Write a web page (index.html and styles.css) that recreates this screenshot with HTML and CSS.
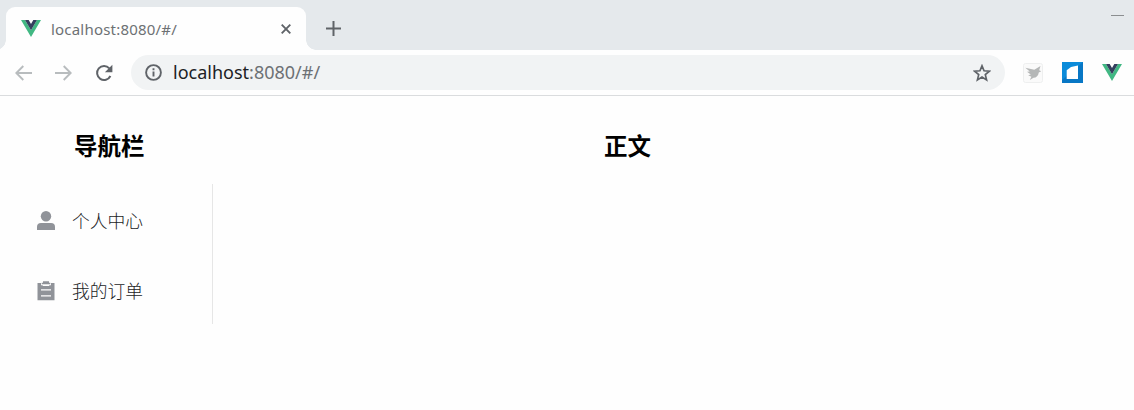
FILE: index.html
```html
<!DOCTYPE html>
<html lang="zh-CN">
<head>
<meta charset="utf-8">
<title>localhost:8080/#/</title>
<link rel="stylesheet" href="styles.css">
</head>
<body>
<svg class="defs" width="0" height="0">
  <symbol id="vue" viewBox="0 0 20 17">
    <path fill="#41b883" d="M0 0h4l6 10.300L16 0h4L10 17z"/>
    <path fill="#34405e" d="M4 0h3.700L10 4l2.300-4H16l-6 10.300z"/>
  </symbol>
</svg>
<header class="tabstrip">
  <div class="tab">
    <svg class="vue" viewBox="0 0 20 17"><use href="#vue"/></svg>
    <span class="tab-title">localhost:8080/#/</span>
    <svg class="close" viewBox="0 0 10 10"><path d="M.7.7l8.600 8.600M9.300.7L.7 9.300"/></svg>
  </div>
  <svg class="plus" viewBox="0 0 15 15"><path d="M7.500 0v15M0 7.500h15"/></svg>
  <span class="minimize"></span>
</header>
<div class="toolbar">
  <svg class="arrow" viewBox="0 0 17 16"><path d="M17 8H1.300M8.300 1L1.300 8l7 7"/></svg>
  <svg class="arrow" viewBox="0 0 17 16"><path d="M0 8h15.700M8.700 1l7 7-7 7"/></svg>
  <svg class="reload" viewBox="0 0 18 18"><path class="stroke" d="M15.400 12A7 7 0 1 1 14.300 4.300"/><path fill="#5f6368" d="M17.400.7v7.500H9.900z"/></svg>
  <div class="omnibox">
    <svg class="info" viewBox="0 0 17 17"><circle cx="8.500" cy="8.500" r="7.400"/><path d="M8.500 7.500v5M8.500 4.300v2"/></svg>
    <span class="url">localhost<span class="url-rest">:8080/#/</span></span>
    <svg class="star" viewBox="0 0 18 18"><path d="M9 1.800l2.050 4.950 5.350.4-4.100 3.500 1.280 5.250L9 13.100l-4.580 2.800 1.280-5.250-4.100-3.500 5.350-.4z"/></svg>
  </div>
  <div class="extensions">
    <svg class="bird" viewBox="0 0 20 20"><rect x=".5" y=".5" width="19" height="19" rx="2" fill="#fafafa" stroke="#eeefef"/><path fill="#b5b7b7" d="M2.300 4.800l9 2L17.500 3l-1.300 4.200 2 1-2.400 1.200c-.5 3.200-2.300 5.200-5.300 5.400L6.800 17l1.600-3.300-3.200-1.500 2.600-.6-3.800-2.900 2.800-.1z"/></svg>
    <svg class="blue" viewBox="0 0 21 21"><rect width="21" height="21" fill="#0877c5"/><path fill="#0b8bda" d="M0 0h21L0 18z"/><path fill="#fff" d="M4.700 8.200L9 5l7-1.500V17H4.700z"/></svg>
    <svg class="vue" viewBox="0 0 20 17"><use href="#vue"/></svg>
  </div>
</div>
<main class="page">
  <aside class="sidebar">
    <h2 class="heading">导航栏</h2>
    <nav class="menu">
      <a class="menu-item">
        <svg class="menu-icon" viewBox="0 0 18 20"><circle cx="9" cy="5.200" r="5.200"/><path d="M0 19v-3.200Q0 12 4 12h10q4 0 4 3.800V19z"/></svg>
        <span>个人中心</span>
      </a>
      <a class="menu-item">
        <svg class="menu-icon" viewBox="0 0 18 20"><path d="M.5 2H4v2.300h1.500L6 5h6l.5-.7H14V2h3.500v17.300H.5z"/><path d="M6 .3h6v1.500h1.300v1.400H4.700V1.800H6z"/><path class="lines" d="M4 8.900h10M4 14.800h10"/></svg>
        <span>我的订单</span>
      </a>
    </nav>
  </aside>
  <section class="content"><h2 class="heading">正文</h2></section>
</main>
</body>
</html>
```
FILE: styles.css
```css
* { box-sizing: border-box; }
body {
  margin: 0;
  height: 410px;
  overflow: hidden;
  background: #fefefe;
  font-family: "Noto Sans", "Noto Sans CJK SC", sans-serif;
}
svg { display: block; flex: none; fill: none; }
.defs { position: absolute; }
.tabstrip {
  display: flex;
  height: 50px;
  padding: 7px 10px 0 6px;
  background: #e5e9ec;
}
.tab {
  position: relative;
  display: flex;
  align-items: center;
  width: 300px;
  height: 43px;
  padding: 0 15px;
  border-radius: 9px 9px 0 0;
  background: #fefefe;
}
.tab::before, .tab::after {
  content: "";
  position: absolute;
  bottom: 0;
  width: 10px;
  height: 10px;
}
.tab::before { left: -10px; background: radial-gradient(circle at 0 0, transparent 9.500px, #fefefe 10px); }
.tab::after { right: -10px; background: radial-gradient(circle at 100% 0, transparent 9.500px, #fefefe 10px); }
.vue { width: 20px; height: 17px; }
.tab-title {
  flex: 1;
  margin-left: 10px;
  color: #6d7174;
  font-size: 15px;
  letter-spacing: .2px;
  line-height: 22px;
  white-space: nowrap;
}
.close { width: 10px; height: 10px; stroke: #5f6368; stroke-width: 1.900; }
.plus { width: 15px; height: 15px; margin: 14px 0 0 20px; stroke: #606468; stroke-width: 2; }
.minimize { width: 13px; height: 1px; margin: 8px 0 0 auto; background: #8b8e90; }
.toolbar {
  display: flex;
  align-items: center;
  height: 46px;
  padding: 0 12px 0 15px;
  border-bottom: 1px solid #dadcde;
}
.arrow { width: 17px; height: 16px; margin-right: 23px; stroke: #b8bcbe; stroke-width: 1.900; }
.reload { width: 18px; height: 18px; }
.stroke { stroke: #5f6368; stroke-width: 2; }
.omnibox {
  display: flex;
  align-items: center;
  width: 874px;
  height: 35px;
  margin-left: 18px;
  padding: 0 14px;
  border-radius: 18px;
  background: #f1f3f4;
}
.info { width: 17px; height: 17px; stroke: #5f6368; stroke-width: 1.900; }
.url { flex: 1; margin-left: 11px; padding-bottom: 2px; color: #202124; font-size: 18px; line-height: 26px; white-space: nowrap; }
.url-rest { color: #6d7174; }
.star { width: 18px; height: 18px; stroke: #5f6368; stroke-width: 1.700; }
.extensions { display: flex; align-items: center; gap: 19px; margin-left: 18px; }
.bird { width: 20px; height: 20px; }
.blue { width: 21px; height: 21px; }
.page { display: flex; }
.sidebar { width: 213px; }
.heading { margin: 0; font-size: 23.500px; line-height: 34px; font-weight: 700; color: #000; }
.sidebar .heading { margin: 33px 0 21px 74px; }
.content .heading { margin: 33px 0 0 391px; }
.menu { height: 140px; border-right: 1px solid #e6e6e6; }
.menu-item {
  display: flex;
  align-items: center;
  height: 70px;
  padding: 4px 0 0 37px;
  color: #1c1d1f;
  font-size: 17.800px;
  line-height: 26px;
  font-weight: 300;
}
.menu-icon { width: 18px; height: 20px; margin-right: 17px; fill: #909399; }
.lines { stroke: #fefefe; stroke-width: 1.300; }
```
